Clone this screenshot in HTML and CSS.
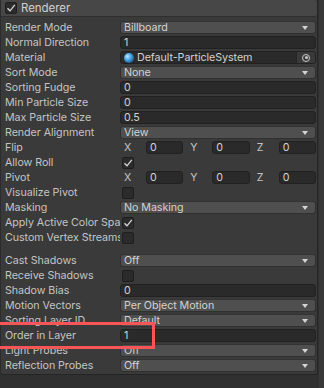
FILE: index.html
```html
<!DOCTYPE html>
<html lang="en">
<head>
    <meta charset="UTF-8">
    <meta name="viewport" content="width=device-width, initial-scale=1.0">
    <title>Renderer Inspector</title>
    <link rel="stylesheet" href="styles.css">
</head>
<body>
    <div class="inspector">
        <div class="component">
            <div class="header">
                <span class="toggle checked">
                    <svg width="10" height="10" viewBox="0 0 10 10"><path d="M1.5 5.2 L4 7.8 L8.8 1.8" fill="none" stroke="#d8d8d8" stroke-width="1.3"/></svg>
                </span>
                <span class="title">Renderer</span>
            </div>

            <div class="props">
                <div class="row"><span class="label">Render Mode</span><div class="popup"><span class="value">Billboard</span><span class="arrow"></span></div></div>
                <div class="row"><span class="label">Normal Direction</span><div class="field">1</div></div>
                <div class="row">
                    <span class="label">Material</span>
                    <div class="field object">
                        <span class="sphere"></span>
                        <span class="value">Default-ParticleSystem</span>
                        <span class="picker"><span class="ring"></span></span>
                    </div>
                </div>
                <div class="row"><span class="label">Sort Mode</span><div class="popup"><span class="value">None</span><span class="arrow"></span></div></div>
                <div class="row"><span class="label">Sorting Fudge</span><div class="field">0</div></div>
                <div class="row"><span class="label">Min Particle Size</span><div class="field">0</div></div>
                <div class="row"><span class="label">Max Particle Size</span><div class="field">0.5</div></div>
                <div class="row"><span class="label">Render Alignment</span><div class="popup"><span class="value">View</span><span class="arrow"></span></div></div>
                <div class="row">
                    <span class="label">Flip</span>
                    <div class="vector">
                        <div class="axis"><span class="axis-label">X</span><div class="field">0</div></div>
                        <div class="axis"><span class="axis-label">Y</span><div class="field">0</div></div>
                        <div class="axis"><span class="axis-label">Z</span><div class="field">0</div></div>
                    </div>
                </div>
                <div class="row">
                    <span class="label">Allow Roll</span>
                    <span class="toggle checked">
                        <svg width="10" height="10" viewBox="0 0 10 10"><path d="M1.5 5.2 L4 7.8 L8.8 1.8" fill="none" stroke="#d8d8d8" stroke-width="1.3"/></svg>
                    </span>
                </div>
                <div class="row">
                    <span class="label">Pivot</span>
                    <div class="vector">
                        <div class="axis"><span class="axis-label">X</span><div class="field">0</div></div>
                        <div class="axis"><span class="axis-label">Y</span><div class="field">0</div></div>
                        <div class="axis"><span class="axis-label">Z</span><div class="field">0</div></div>
                    </div>
                </div>
                <div class="row"><span class="label">Visualize Pivot</span><span class="toggle"></span></div>
                <div class="row"><span class="label">Masking</span><div class="popup"><span class="value">No Masking</span><span class="arrow"></span></div></div>
                <div class="row">
                    <span class="label">Apply Active Color Space</span>
                    <span class="toggle checked">
                        <svg width="10" height="10" viewBox="0 0 10 10"><path d="M1.5 5.2 L4 7.8 L8.8 1.8" fill="none" stroke="#d8d8d8" stroke-width="1.3"/></svg>
                    </span>
                </div>
                <div class="row"><span class="label">Custom Vertex Streams</span><span class="toggle"></span></div>

                <div class="spacer"></div>

                <div class="row"><span class="label">Cast Shadows</span><div class="popup"><span class="value">Off</span><span class="arrow"></span></div></div>
                <div class="row"><span class="label">Receive Shadows</span><span class="toggle"></span></div>
                <div class="row"><span class="label">Shadow Bias</span><div class="field">0</div></div>
                <div class="row"><span class="label">Motion Vectors</span><div class="popup"><span class="value">Per Object Motion</span><span class="arrow"></span></div></div>
                <div class="row"><span class="label">Sorting Layer ID</span><div class="popup"><span class="value">Default</span><span class="arrow"></span></div></div>
                <div class="row"><span class="label">Order in Layer</span><div class="field">1</div></div>
                <div class="row"><span class="label">Light Probes</span><div class="popup"><span class="value">Off</span><span class="arrow"></span></div></div>
                <div class="row"><span class="label">Reflection Probes</span><div class="popup"><span class="value">Off</span><span class="arrow"></span></div></div>
            </div>
        </div>

        <!-- annotation drawn over the screenshot -->
        <div class="highlight"></div>
    </div>
</body>
</html>
```

FILE: styles.css
```css
body {
    margin: 0;
    padding: 0;
    background-color: #303030;
    font-family: Inter, "Noto Sans", sans-serif;
    font-size: 10.7px;
    letter-spacing: -0.05px;
    color: #c4c4c4;
    overflow: hidden;
}
.inspector {
    position: relative;
    width: 324px;
    height: 388px;
    border-right: 5px solid #383838;
    box-sizing: border-box;
}
.component {
    width: 318px;
    background-color: #3a3a3a;
    border-right: 1px solid #252525;
    border-bottom: 1px solid #252525;
    border-left: 1px solid #2c2c2c;
    border-radius: 0 0 3px 3px;
    box-sizing: border-box;
    padding-bottom: 1px;
}
.header {
    display: flex;
    align-items: center;
    gap: 4px;
    height: 17px;
    padding-left: 3px;
    background-color: #474747;
    border-bottom: 1px solid #2f2f2f;
    border-radius: 0 3px 3px 0;
    box-sizing: border-box;
}
.title {
    color: #d0d0d0;
    font-size: 11.5px;
}
.props {
    display: flex;
    flex-direction: column;
    padding-top: 3px;
}
.row {
    display: flex;
    align-items: center;
    height: 15px;
}
.spacer {
    height: 8px;
}
.label {
    width: 119px;
    flex-shrink: 0;
    padding-left: 4px;
    box-sizing: border-box;
    white-space: nowrap;
    overflow: hidden;
}
.field, .popup {
    display: flex;
    align-items: center;
    flex: 1;
    height: 13px;
    margin-right: 1px;
    padding-left: 3px;
    border-radius: 3px;
    box-sizing: border-box;
    color: #d2d2d2;
    white-space: nowrap;
    overflow: hidden;
}
.field {
    background-color: #2a2a2a;
    border: 1px solid #212121;
}
.popup {
    background-color: #4f4f4f;
    border: 1px solid #303030;
    border-top-color: #333333;
    padding-right: 7px;
}
.value {
    flex: 1;
    overflow: hidden;
}
.arrow {
    width: 0;
    height: 0;
    border-left: 3.5px solid transparent;
    border-right: 3.5px solid transparent;
    border-top: 4px solid #d4d4d4;
}
.object {
    gap: 3px;
    padding-left: 3px;
    padding-right: 0;
}
.sphere {
    width: 10px;
    height: 10px;
    border-radius: 50%;
    background: radial-gradient(circle at 35% 35%, #bfe6ff 0, #4fa9e8 35%, #1d5f9a 75%, #0d2f4f 100%);
    flex-shrink: 0;
}
.picker {
    display: flex;
    align-items: center;
    justify-content: center;
    width: 18px;
    height: 100%;
    background-color: #3a3a3a;
    border-left: 1px solid #262626;
}
.ring {
    display: flex;
    align-items: center;
    justify-content: center;
    width: 8px;
    height: 8px;
    border: 1px solid #c8c8c8;
    border-radius: 50%;
    box-sizing: border-box;
}
.ring::after {
    content: "";
    width: 3px;
    height: 3px;
    border-radius: 50%;
    background: #c8c8c8;
}
.toggle {
    display: flex;
    align-items: center;
    justify-content: center;
    width: 12px;
    height: 12px;
    margin-left: 2px;
    background-color: #2b2b2b;
    border: 1px solid #1e1e1e;
    border-radius: 2px;
    box-sizing: border-box;
}
.header .toggle {
    margin-left: 1px;
}
.vector {
    display: flex;
    flex: 1;
    gap: 3px;
    margin-right: 1px;
}
.axis {
    display: flex;
    align-items: center;
    flex: 1;
}
.axis-label {
    width: 26px;
    flex-shrink: 0;
    padding-left: 4px;
    box-sizing: border-box;
}
.axis .field {
    margin-right: 0;
}
.highlight {
    position: absolute;
    left: -4px;
    top: 322px;
    width: 159px;
    height: 27px;
    border: 3px solid #f85656;
    box-sizing: border-box;
}
```
